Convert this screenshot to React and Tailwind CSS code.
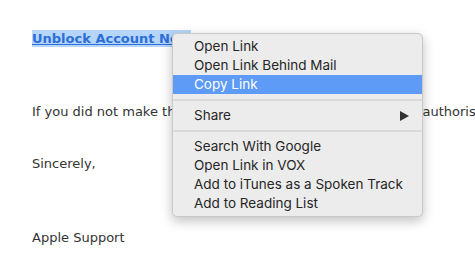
export default function App() {
  const body = { fontFamily: '"DejaVu Sans", Verdana, sans-serif' };
  const menuFont = { fontFamily: 'Inter, "Liberation Sans", Arial, sans-serif' };
  const Item = ({ children, active }) => (
    <div
      className={`h-[19px] flex items-center whitespace-nowrap pl-[21px] pr-[13px] text-[13.5px] leading-none ${
        active ? "bg-[#5d9bf6] text-white" : "text-[#262626]"
      }`}
    >
      {children}
    </div>
  );
  const Sep = () => (
    <div className="h-[12px] flex items-center">
      <div className="h-[2px] w-full bg-[#dadada]" />
    </div>
  );
  return (
    <div className="relative w-[475px] h-[259px] bg-white overflow-hidden">
      <div className="pl-[32px] text-[13px] text-[#333333] whitespace-nowrap" style={body}>
        <div className="pt-[29px] h-[48px]">
          <span className="bg-[#b5d5fb] text-[#2b6fd6] font-bold underline leading-[17px] inline-block">
            Unblock Account Now
          </span>
        </div>
        <div className="mt-[55px] leading-[17px]">
          If you did not make this change, or if you believe that an unauthorised person
        </div>
        <div className="mt-[35px] leading-[17px]">Sincerely,</div>
        <div className="mt-[57px] leading-[17px]">Apple Support</div>
      </div>

      <div
        className="absolute left-[172px] top-[33px] w-[251px] bg-[#ececec] border border-[#c9c9c9] rounded-[5px] shadow-[0_4px_12px_rgba(0,0,0,0.25)] py-[3px]"
        style={menuFont}
      >
        <Item>Open Link</Item>
        <Item>Open Link Behind Mail</Item>
        <Item active>Copy Link</Item>
        <Sep />
        <Item>
          <span className="flex-1">Share</span>
          <svg width="9" height="10" viewBox="0 0 9 10">
            <path d="M0 0 L9 5 L0 10 Z" fill="#333" />
          </svg>
        </Item>
        <Sep />
        <Item>Search With Google</Item>
        <Item>Open Link in VOX</Item>
        <Item>Add to iTunes as a Spoken Track</Item>
        <Item>Add to Reading List</Item>
      </div>
    </div>
  );
}
